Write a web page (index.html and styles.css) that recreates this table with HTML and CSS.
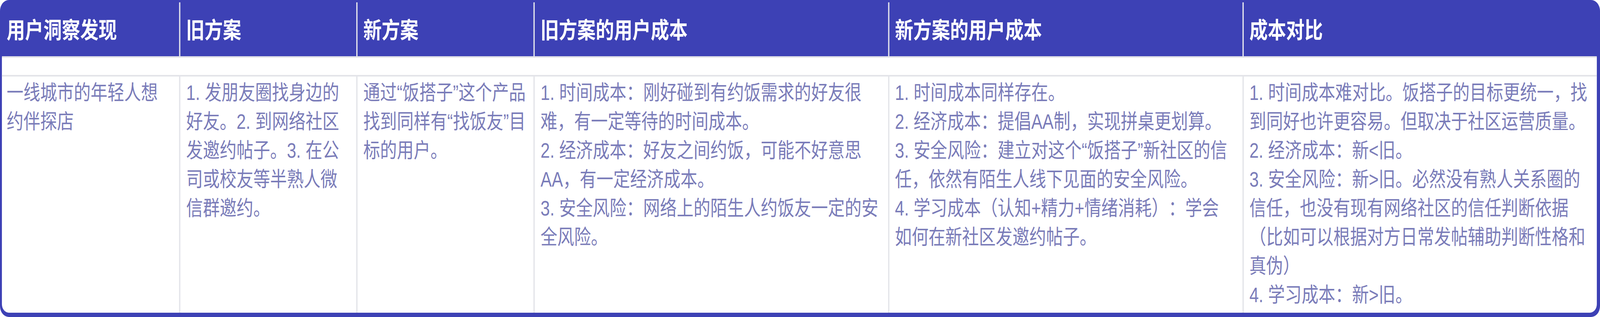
FILE: index.html
```html
<!DOCTYPE html>
<html lang="zh-CN">
<head>
<meta charset="utf-8">
<title>用户成本对比</title>
<link rel="stylesheet" href="styles.css">
</head>
<body>
<div class="page">
<div class="card">
  <div class="head">
    <div class="hcell">用户洞察发现</div>
    <div class="hcell">旧方案</div>
    <div class="hcell">新方案</div>
    <div class="hcell">旧方案的用户成本</div>
    <div class="hcell">新方案的用户成本</div>
    <div class="hcell">成本对比</div>
  </div>
  <div class="sheet">
    <div class="spacer"></div>
    <div class="row">
      <div class="cell">一线城市的年轻人想约伴探店</div>
      <div class="cell">1. 发朋友圈找身边的好友。2. 到网络社区发邀约帖子。3. 在公司或校友等半熟人微信群邀约。</div>
      <div class="cell">通过“饭搭子”这个产品找到同样有“找饭友”目标的用户。</div>
      <div class="cell wide">
        <div>1. 时间成本：刚好碰到有约饭需求的好友很难，有一定等待的时间成本。</div>
        <div>2. 经济成本：好友之间约饭，可能不好意思AA，有一定经济成本。</div>
        <div>3. 安全风险：网络上的陌生人约饭友一定的安全风险。</div>
      </div>
      <div class="cell wide">
        <div>1. 时间成本同样存在。</div>
        <div>2. 经济成本：提倡AA制，实现拼桌更划算。</div>
        <div>3. 安全风险：建立对这个“饭搭子”新社区的信任，依然有陌生人线下见面的安全风险。</div>
        <div>4. 学习成本（认知+精力+情绪消耗）：学会如何在新社区发邀约帖子。</div>
      </div>
      <div class="cell wide">
        <div>1. 时间成本难对比。饭搭子的目标更统一，找到同好也许更容易。但取决于社区运营质量。</div>
        <div>2. 经济成本：新&lt;旧。</div>
        <div>3. 安全风险：新&gt;旧。必然没有熟人关系圈的信任，也没有现有网络社区的信任判断依据（比如可以根据对方日常发帖辅助判断性格和真伪）</div>
        <div>4. 学习成本：新&gt;旧。</div>
      </div>
    </div>
  </div>
</div>
</div>
</body>
</html>
```
FILE: styles.css
```css
* {
  box-sizing: border-box;
}

html,
body {
  margin: 0;
  padding: 0;
  background: #ffffff;
  overflow: hidden;
}

body {
  font-family: "Liberation Sans", "Noto Sans CJK SC", sans-serif;
}

.page {
  width: 100vw;
  height: 812px;
  overflow: hidden;
}

.card {
  width: 5048px;
  height: 812px;
  background: #3d41b5;
  border-radius: 28px;
  padding: 0 10px 11px 6px;
  display: flex;
  flex-direction: column;
  overflow: hidden;
  transform-origin: 0 0;
  text-spacing-trim: space-all;
}

/* the browser window may be narrower than the 5048px design: fit it horizontally */
@media (max-width: 4800px) {
  .card {
    transform: scaleX(0.811410);
  }
}

.head {
  display: grid;
  grid-template-columns: minmax(0, 1fr) minmax(0, 1fr) minmax(0, 1fr) minmax(0, 2fr) minmax(0, 2fr) minmax(0, 2fr);
  height: 144px;
  padding-top: 6px;
  color: #ffffff;
  font-size: 58px;
  font-weight: 600;
}

.hcell {
  display: flex;
  align-items: center;
  padding: 0 20px 4px 18px;
  border-left: 4px solid #e4e5ec;
  white-space: nowrap;
}

.hcell:first-child {
  border-left: none;
  padding-left: 15px;
}

.sheet {
  flex: 1;
  display: flex;
  flex-direction: column;
  background: #ffffff;
  border-top: 4px solid #e3e4e9;
  border-radius: 0 0 22px 22px;
}

.spacer {
  height: 48px;
  border-bottom: 4px solid #e3e4e9;
}

.row {
  flex: 1;
  display: grid;
  grid-template-columns: minmax(0, 1fr) minmax(0, 1fr) minmax(0, 1fr) minmax(0, 2fr) minmax(0, 2fr) minmax(0, 2fr);
  font-size: 53px;
  line-height: 74px;
  color: #7a7cb9;
}

.cell {
  border-left: 4px solid #e3e4e9;
  padding: 5px 20px 0 18px;
}

.cell:first-child {
  border-left: none;
  padding-left: 15px;
}

.cell.wide {
  padding-right: 26px;
}
```
